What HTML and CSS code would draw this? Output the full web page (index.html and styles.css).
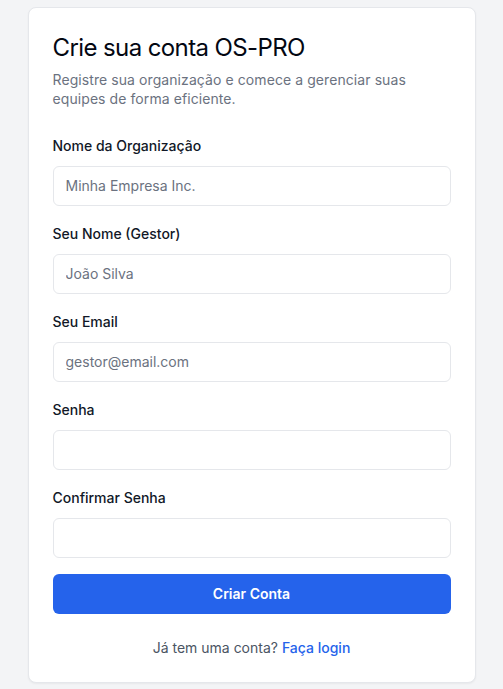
FILE: index.html
```html
<!DOCTYPE html>
<html lang="pt-BR">
<head>
<meta charset="utf-8">
<title>Crie sua conta OS-PRO</title>
<link rel="stylesheet" href="styles.css">
</head>
<body>
<main class="page">
  <section class="card">
    <header class="head">
      <h1 class="title">Crie sua conta OS-PRO</h1>
      <p class="subtitle">Registre sua organização e comece a gerenciar suas equipes de forma eficiente.</p>
    </header>
    <form class="form">
      <div class="field">
        <label class="label" for="org">Nome da Organização</label>
        <input class="input" id="org" type="text" placeholder="Minha Empresa Inc.">
      </div>
      <div class="field">
        <label class="label" for="nome">Seu Nome (Gestor)</label>
        <input class="input" id="nome" type="text" placeholder="João Silva">
      </div>
      <div class="field">
        <label class="label" for="email">Seu Email</label>
        <input class="input" id="email" type="email" placeholder="gestor@email.com">
      </div>
      <div class="field">
        <label class="label" for="senha">Senha</label>
        <input class="input" id="senha" type="password">
      </div>
      <div class="field">
        <label class="label" for="conf">Confirmar Senha</label>
        <input class="input" id="conf" type="password">
      </div>
      <button class="btn" type="button">Criar Conta</button>
    </form>
    <p class="foot">Já tem uma conta? <a class="link" href="#">Faça login</a></p>
  </section>
</main>
</body>
</html>
```

FILE: styles.css
```css
* { box-sizing: border-box; }
html, body { margin: 0; padding: 0; }
body {
  background: #f3f4f6;
  font-family: Inter, "Noto Sans", sans-serif;
  color: #111827;
}
.page {
  min-height: 100vh;
  display: flex;
  align-items: center;
  justify-content: center;
}
.card {
  width: 448px;
  background: #ffffff;
  border: 1px solid #e5e7eb;
  border-radius: 8px;
  box-shadow: 0 1px 2px rgba(0,0,0,0.05);
  padding: 24px;
}
.head { margin-bottom: 28px; }
.title {
  margin: 0;
  font-size: 24px;
  line-height: 32px;
  font-weight: 400;
  color: #030712;
  letter-spacing: -0.6px;
}
.subtitle {
  margin: 6px 0 0;
  font-size: 14px;
  line-height: 19px;
  color: #6b7280;
  letter-spacing: 0.08px;
}
.form { display: flex; flex-direction: column; }
.field { display: flex; flex-direction: column; margin-bottom: 18px; }
.field:last-of-type { margin-bottom: 16px; }
.label {
  font-size: 14px;
  line-height: 20px;
  font-weight: 500;
  color: #111827;
  margin-bottom: 10px;
}
.input {
  height: 40px;
  width: 100%;
  border: 1px solid #e5e7eb;
  border-radius: 6px;
  padding: 0 12px;
  font-family: inherit;
  font-size: 14px;
  color: #111827;
  background: #fff;
  outline: none;
}
.input::placeholder { color: #6b7280; }
.btn {
  height: 40px;
  width: 100%;
  border: 0;
  border-radius: 6px;
  background: #2563eb;
  color: #ffffff;
  font-family: inherit;
  font-size: 14px;
  font-weight: 600;
}
.foot {
  margin: 24px 0 0;
  text-align: center;
  font-size: 14px;
  line-height: 20px;
  color: #4b5563;
}
.link {
  color: #2563eb;
  font-weight: 500;
  text-decoration: none;
}
```
